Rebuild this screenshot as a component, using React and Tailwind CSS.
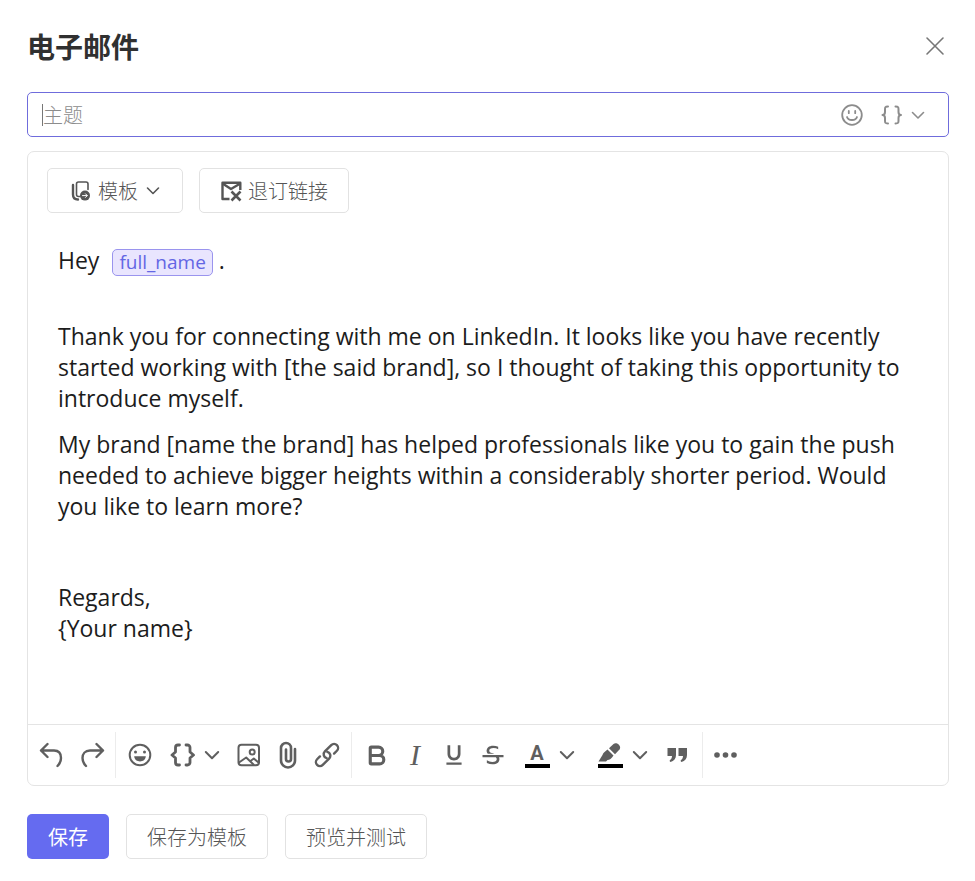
import React, { useState } from "react";
import { Bold } from "lucide-react";
import { MdFormatUnderlined } from "react-icons/md";
import { RiStrikethrough } from "react-icons/ri";

const Icon = ({ children, className = "size-7", box = 28 }) => (
  <svg
    className={className}
    viewBox={`0 0 ${box} ${box}`}
    fill="none"
    stroke="currentColor"
    strokeWidth="2.4"
    strokeLinecap="round"
    strokeLinejoin="round"
    aria-hidden="true"
  >
    {children}
  </svg>
);

const Chevron = () => (
  <Icon className="size-4" box={16}>
    <path d="M1.8 5L8 11.2L14.2 5" strokeWidth="2" />
  </Icon>
);

const ToolButton = ({ label, children }) => (
  <button
    type="button"
    aria-label={label}
    className="flex size-7 items-center justify-center rounded hover:bg-gray-100"
  >
    {children}
  </button>
);

const DropButton = ({ label, className = "gap-2 px-[5px]", children }) => (
  <button
    type="button"
    aria-label={label}
    className={`flex h-7 items-center rounded hover:bg-gray-100 ${className}`}
  >
    {children}
    <Chevron />
  </button>
);

const ToolGroup = ({ children }) => (
  <div className="flex h-[46px] items-center gap-[11px] border-r border-[#ececec] px-[10px] last:border-r-0">
    {children}
  </div>
);

const OutlineButton = ({ children, className = "px-5" }) => (
  <button
    type="button"
    className={`flex h-[45px] items-center rounded-[5px] border border-[#e2e2e2] bg-white font-light hover:bg-gray-50 ${className}`}
  >
    {children}
  </button>
);

const App = () => {
  const [subject, setSubject] = useState("");

  return (
    <div className="min-h-screen bg-white pt-7 pr-[26px] pb-6 pl-[27px] font-['Noto_Sans_CJK_SC',sans-serif] text-xl leading-7 text-[#555]">
      <div className="flex h-9 items-center justify-between">
        <h1 className="text-[28px] font-bold text-[#303030]">电子邮件</h1>
        <button type="button" aria-label="关闭" className="text-[#777]">
          <Icon>
            <path d="M6 6L22 22M22 6L6 22" strokeWidth="1.6" />
          </Icon>
        </button>
      </div>

      {/* Subject */}
      <div className="mt-7 flex h-[45px] items-center rounded-[5px] border border-[#6f6cdc] pr-[22px] pl-[14px] text-[#8c8c8c]">
        <span className="h-[22px] w-px bg-[#777]" />
        <input
          type="text"
          aria-label="主题"
          placeholder="主题"
          className="min-w-0 flex-1 bg-transparent font-light text-[#333] caret-transparent outline-none placeholder:text-[#8c8c8c]"
          value={subject}
          onChange={(e) => setSubject(e.target.value)}
        />
        <button type="button" aria-label="表情">
          <Icon>
            <g strokeWidth="1.8">
              <circle cx="14" cy="14" r="9.8" />
              <path d="M10.8 10v2.2M17.2 10v2.2M9 16c1.2 4 8.8 4 10 0" />
            </g>
          </Icon>
        </button>
        <button
          type="button"
          aria-label="变量"
          className="ml-3 flex items-center"
        >
          <Icon>
            <path
              d="M10 5.5C7 5.5 7 6.5 7 8.5V11c0 2-1 3-2.5 3 1.5 0 2.5 1 2.5 3v2.5c0 2 0 3 3 3M17.5 5.5c3 0 3 1 3 3V11c0 2 1 3 2.5 3-1.5 0-2.5 1-2.5 3v2.5c0 2 0 3-3 3"
              strokeWidth="2"
            />
          </Icon>
          <Icon className="ml-1 size-4" box={16}>
            <path d="M2.5 5.5L8 11L13.5 5.5" strokeWidth="1.6" />
          </Icon>
        </button>
      </div>

      {/* Editor */}
      <div className="mt-[14px] rounded-[7px] border border-[#e4e4e4]">
        <div className="flex gap-4 px-[19px] pt-4">
          <OutlineButton className="gap-[7px] pr-[21px] pl-[23px]">
            <Icon className="size-5" box={20}>
              <path d="M2 4V13.5C2 17 3.5 18.5 7 18.5" strokeWidth="2.4" />
              <path
                d="M9 15.5H7.5A2 2 0 0 1 5.5 13.5V3A2 2 0 0 1 7.5 1H15A2 2 0 0 1 17 3V8.5"
                strokeWidth="1.6"
              />
              <circle cx="14" cy="14.6" r="5" fill="currentColor" stroke="none" />
              <path
                d="M11.5 14.6H16M14.5 12.8L16.3 14.6L14.5 16.4"
                stroke="white"
                strokeWidth="1"
              />
            </Icon>
            <span>模板</span>
            <Icon className="size-4" box={16}>
              <path d="M2.5 5L8 10.5L13.5 5" strokeWidth="1.6" />
            </Icon>
          </OutlineButton>
          <OutlineButton className="gap-[6px] px-5">
            <Icon className="size-[22px]" box={22}>
              <g strokeLinecap="butt" strokeLinejoin="round">
                <path d="M9.5 19H2.5V2.8H20.3V10" />
                <path d="M2.5 3.5L11 9L20.3 3.5" />
                <path
                  d="M11.5 11.5L20.5 20.5M20.5 11.5L11.5 20.5"
                  strokeWidth="2.6"
                />
              </g>
            </Icon>
            <span>退订链接</span>
          </OutlineButton>
        </div>

        <div
          role="textbox"
          aria-label="邮件正文"
          aria-multiline="true"
          contentEditable
          suppressContentEditableWarning
          className="min-h-[511px] px-[30px] pt-8 font-['Open_Sans','Noto_Sans_CJK_SC',sans-serif] text-[23px] leading-[31px] text-[#1c1c1c] outline-none"
        >
          <p className="mb-[45px]">
            Hey{" "}
            <span className="ml-[7px] inline-block rounded-[5px] border border-[#9a94ee] bg-[#e9e5fe] px-[6px] align-middle text-[19px] leading-[25px] text-[#6366e4]">
              full_name
            </span>{" "}
            .
          </p>
          <p className="mb-[15px]">
            Thank you for connecting with me on LinkedIn. It looks like you have
            recently started working with [the said brand], so I thought of
            taking this opportunity to introduce myself.
          </p>
          <p className="mb-[60px]">
            My brand [name the brand] has helped professionals like you to gain
            the push needed to achieve bigger heights within a considerably
            shorter period. Would you like to learn more?
          </p>
          <p>
            Regards,
            <br />
            {"{Your name}"}
          </p>
        </div>

        <div className="flex h-[61px] items-center border-t border-[#e4e4e4] text-[#5f5f5f]">
          <ToolGroup>
            <ToolButton label="撤销">
              <Icon>
                <path d="M9.5 3L3 9.5L9.5 16M3 9.5H16C21 9.5 23 13 23 17C23 20.5 21.5 23 19.5 25" />
              </Icon>
            </ToolButton>
            <ToolButton label="重做">
              <Icon>
                <path d="M19.5 3L26 9.5L19.5 16M26 9.5H13C8 9.5 5.5 13 5.5 17C5.5 20.5 7 23 9 25" />
              </Icon>
            </ToolButton>
          </ToolGroup>
          <ToolGroup>
            <ToolButton label="表情">
              <Icon>
                <circle cx="14" cy="14" r="10.3" strokeWidth="2" />
                <g fill="currentColor" stroke="none">
                  <circle cx="9.5" cy="11" r="1.5" />
                  <circle cx="18.5" cy="11" r="1.5" />
                  <path d="M8.2 15.3H19.8C19.3 22.2 8.7 22.2 8.2 15.3Z" />
                </g>
              </Icon>
            </ToolButton>
            <DropButton label="变量" className="gap-[7px] px-1">
              <Icon>
                <path
                  d="M10.5 4H9A2.5 2.5 0 0 0 6.5 6.5V11L3 14L6.5 17V21.5A2.5 2.5 0 0 0 9 24H10.5M17 4H18.5A2.5 2.5 0 0 1 21 6.5V11L24.5 14L21 17V21.5A2.5 2.5 0 0 1 18.5 24H17"
                  strokeWidth="2.8"
                />
              </Icon>
            </DropButton>
            <ToolButton label="图片">
              <Icon>
                <g strokeWidth="2">
                  <rect x="3.5" y="3.7" width="20.5" height="20.5" rx="3" />
                  <circle cx="17.2" cy="11" r="2.5" />
                  <path d="M4 21.5L11.2 16.5L18.5 23.5M15.5 20L18.8 17.5L23.5 21.5" />
                </g>
              </Icon>
            </ToolButton>
            <ToolButton label="附件">
              <Icon>
                <path
                  d="M21 8V19.5A7 7 0 0 1 7 19.5V7A5 5 0 0 1 17 7V18A2.5 2.5 0 0 1 12 18V8.5"
                  strokeWidth="2.6"
                />
              </Icon>
            </ToolButton>
            <ToolButton label="链接">
              <Icon>
                <g transform="translate(14 14) rotate(-45)">
                  <path d="M6 4H10A4 4 0 0 0 10 -4H1A4 4 0 0 0 -2.5 2" />
                  <path d="M-6 -4H-10A4 4 0 0 0 -10 4H-1A4 4 0 0 0 2.5 -2" />
                </g>
              </Icon>
            </ToolButton>
          </ToolGroup>
          <ToolGroup>
            <ToolButton label="粗体">
              <Bold size={25} strokeWidth={3} />
            </ToolButton>
            <ToolButton label="斜体">
              <span className="font-['Liberation_Serif',serif] text-[30px] leading-7 italic">
                I
              </span>
            </ToolButton>
            <ToolButton label="下划线">
              <MdFormatUnderlined size={26} />
            </ToolButton>
            <ToolButton label="删除线">
              <RiStrikethrough size={28} />
            </ToolButton>
            <DropButton label="文字颜色">
              <span className="flex h-7 w-7 flex-col items-center justify-end pb-px">
                <span className="font-[Roboto,sans-serif] text-[20px] leading-[22px] font-bold">
                  A
                </span>
                <span className="h-1 w-[25px] bg-black" />
              </span>
            </DropButton>
            <DropButton label="高亮颜色">
              <span className="flex h-7 w-7 flex-col items-center justify-end pb-px">
                <svg
                  className="h-[22px] w-[25px]"
                  viewBox="0 0 25 22"
                  fill="currentColor"
                  aria-hidden="true"
                >
                  <path d="M0.5 19.5L4.5 13C5 11 7 9.5 9.5 7.5L15.5 13.5C13.5 16.5 11.5 18 9.5 18L8 19.5Z" />
                  <path d="M11 6.3L15.5 2C18.5 -0.5 24 4 21.5 7.5L17 12.3Z" />
                </svg>
                <span className="h-1 w-[25px] bg-black" />
              </span>
            </DropButton>
            <ToolButton label="引用">
              <Icon>
                <g fill="currentColor" stroke="none">
                  <path d="M3.5 7H12V14C12 17.5 10 20 6.5 21C5.5 20.5 5.5 19.5 6 19C7.5 18 8 16.5 8 15H3.5Z" />
                  <path d="M14.5 7H23V14C23 17.5 21 20 17.5 21C16.5 20.5 16.5 19.5 17 19C18.5 18 19 16.5 19 15H14.5Z" />
                </g>
              </Icon>
            </ToolButton>
          </ToolGroup>
          <ToolGroup>
            <ToolButton label="更多">
              <Icon>
                <g fill="currentColor" stroke="none">
                  <circle cx="4" cy="14" r="2.8" />
                  <circle cx="12.5" cy="14" r="2.8" />
                  <circle cx="21" cy="14" r="2.8" />
                </g>
              </Icon>
            </ToolButton>
          </ToolGroup>
        </div>
      </div>

      {/* Footer */}
      <div className="mt-7 flex gap-[17px]">
        <button
          type="button"
          className="h-[45px] rounded-[5px] bg-[#656bf0] px-[21px] text-white hover:bg-[#565ce0]"
        >
          保存
        </button>
        <OutlineButton>保存为模板</OutlineButton>
        <OutlineButton>预览并测试</OutlineButton>
      </div>
    </div>
  );
};

export default App;
